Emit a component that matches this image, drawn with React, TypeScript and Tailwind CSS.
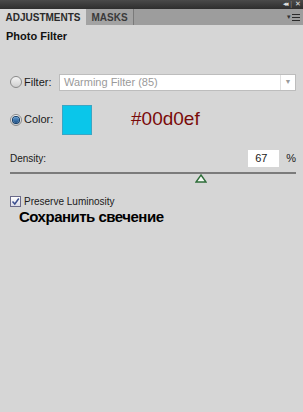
import type { ReactNode } from "react";

const Radio = ({ checked }: { checked?: boolean }) => (
  <span className="flex h-[12px] w-[12px] items-center justify-center rounded-full border border-[#8a8a8a] bg-gradient-to-b from-[#f4f4f4] to-[#cfcfcf]">
    {checked && (
      <span className="h-[6px] w-[6px] rounded-full bg-gradient-to-b from-[#5f9ad0] to-[#1c4f86] ring-1 ring-[#0f3a66]" />
    )}
  </span>
);

const Row = ({ children, className }: { children: ReactNode; className?: string }) => (
  <div className={`flex items-center ${className ?? ""}`}>{children}</div>
);

export default function App() {
  return (
    <div
      className="flex h-[412px] w-[303px] flex-col bg-[#d6d6d6] text-[11px] text-[#1a1a1a]"
      style={{ fontFamily: '"Liberation Sans", Arial, sans-serif' }}
    >
      {/* title strip */}
      <div className="flex h-[9px] items-start justify-end gap-[3px] bg-gradient-to-b from-[#4a4a4a] to-[#2e2e2e] pr-[2px] text-[7px] leading-[8px] text-[#e0e0e0]">
        <span className="tracking-[-2px]">◂◂</span>
        <span className="text-[#888]">|</span>
        <span>✕</span>
      </div>

      {/* tabs */}
      <div className="flex h-[16px] items-stretch bg-[#9d9d9d]">
        <div className="flex w-[86px] items-center justify-center bg-[#d6d6d6] text-[10px] font-bold text-[#2a2a2a]">
          ADJUSTMENTS
        </div>
        <div className="flex w-[48px] items-center justify-center border-r border-[#7a7a7a] bg-[#a3a3a3] text-[10px] font-bold text-[#3a3a3a]">
          MASKS
        </div>
        <div className="flex-1" />
        <div className="flex items-center gap-[1px] pr-[3px]">
          <span className="text-[7px] text-[#333]">▾</span>
          <div className="flex flex-col gap-[2px]">
            <span className="h-[1px] w-[8px] bg-[#2a2a2a]" />
            <span className="h-[1px] w-[8px] bg-[#2a2a2a]" />
            <span className="h-[1px] w-[8px] bg-[#2a2a2a]" />
          </div>
        </div>
      </div>

      <div className="flex flex-col px-[6px]">
        <div className="mt-[3px] text-[11px] font-bold text-[#111]">Photo Filter</div>

        <Row className="mt-[29px] h-[17px]">
          <div className="ml-[4px]">
            <Radio />
          </div>
          <span className="ml-[2px] w-[35px] text-[11px]">Filter:</span>
          <div className="mr-[1px] flex h-[17px] flex-1 items-center border border-[#bdbdbd] bg-white">
            <span className="flex-1 pl-[4px] text-[11px] text-[#9a9a9a]">Warming Filter (85)</span>
            <span className="flex h-full w-[15px] items-center justify-center border-l border-[#e0e0e0] text-[7px] text-[#9a9a9a]">
              ▼
            </span>
          </div>
        </Row>

        <Row className="mt-[14px] h-[30px]">
          <div className="ml-[4px]">
            <Radio checked />
          </div>
          <span className="ml-[2px] w-[38px] text-[11px]">Color:</span>
          <div className="h-[30px] w-[30px] border border-[#3aa6c4] bg-[#0ac6ea]" />
          <span className="ml-[39px] text-[19px] text-[#7a0a0a]">#00d0ef</span>
        </Row>

        <Row className="mt-[15px] h-[17px] justify-between">
          <span className="ml-[4px] text-[10px]">Density:</span>
          <div className="flex items-center">
            <div className="flex h-[17px] w-[31px] items-center bg-white pl-[7px] text-[11px]">67</div>
            <span className="ml-[7px] mr-[1px] text-[11px]">%</span>
          </div>
        </Row>

        <div className="relative mt-[5px] ml-[4px] mr-[1px] h-[12px]">
          <div className="h-[2px] w-full bg-[#7b7b7b]" />
          <svg className="absolute left-[185px] top-[2px]" width="12" height="9" viewBox="0 0 12 9">
            <polygon points="6,1 11,8 1,8" fill="#f4f8f4" stroke="#2f6e3a" strokeWidth="1.4" />
          </svg>
        </div>

        <Row className="mt-[12px] h-[12px]">
          <span className="ml-[4px] flex h-[11px] w-[11px] items-center justify-center border border-[#6a6a8a] bg-gradient-to-b from-[#ffffff] to-[#dcdce8]">
            <svg width="9" height="9" viewBox="0 0 9 9">
              <path d="M1.5 4.5 L3.8 7 L7.8 1.5" fill="none" stroke="#3b4f8f" strokeWidth="1.5" />
            </svg>
          </span>
          <span className="ml-[3px] text-[10px]">Preserve Luminosity</span>
        </Row>
        <div className="ml-[13px] text-[15px] font-bold leading-[18px] tracking-[-0.5px] text-black">
          Сохранить свечение
        </div>
      </div>
    </div>
  );
}
